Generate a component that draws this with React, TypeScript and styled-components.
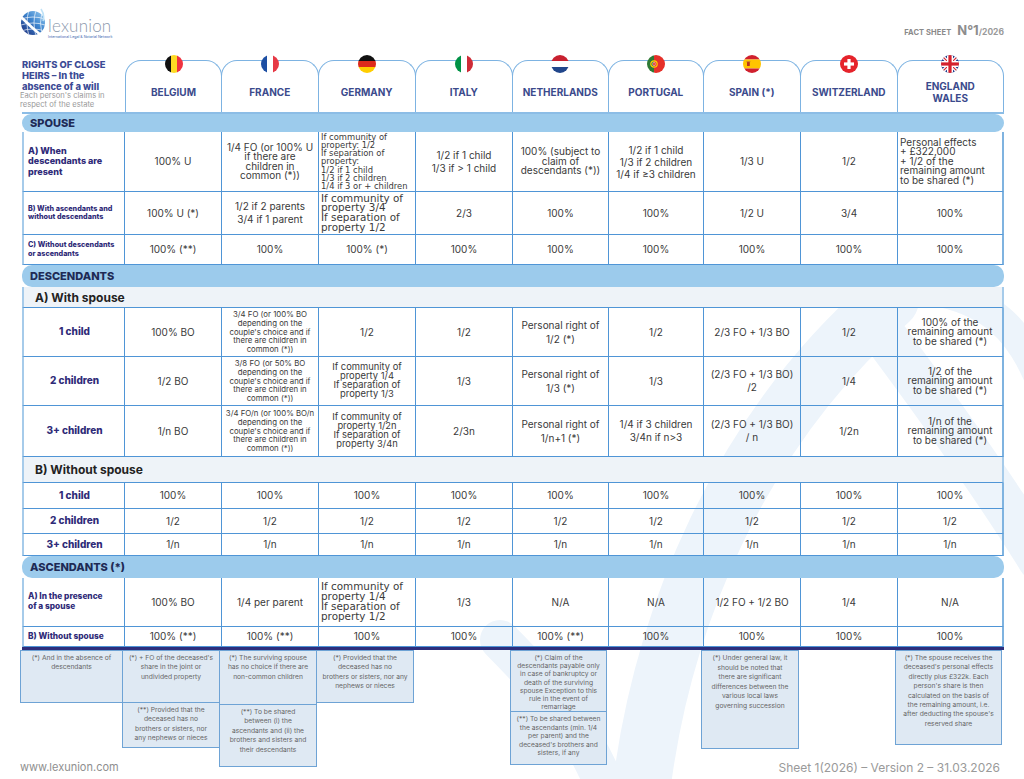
import React from 'react';
import styled, { createGlobalStyle } from 'styled-components';

const COLS = '103px 97px 97px 97px 97px 96px 95px 97px 97px 106px';
const LINE = '#4f95d6';
const EDGE = '#a6cbea';

const GlobalStyle = createGlobalStyle`
    html, body {
        margin: 0;
        padding: 0;
        background: #fff;
    }
    body {
        font-family: Inter, "Noto Sans", sans-serif;
        color: #3a3a3a;
    }
`;

const Page = styled.div`
    position: relative;
    width: 1024px;
    height: 779px;
    overflow: hidden;
    background: #fff;
    display: flex;
    flex-direction: column;
`;

const Watermark = styled.svg`
    position: absolute;
    inset: 0;
    z-index: 0;
    pointer-events: none;
`;

const Content = styled.div`
    position: relative;
    z-index: 1;
    display: flex;
    flex-direction: column;
    height: 100%;
`;

const TopBar = styled.div`
    height: 52px;
    display: flex;
    justify-content: space-between;
    align-items: flex-start;
    padding: 7px 20px 0 19px;
    box-sizing: border-box;
`;

const Logo = styled.div`
    display: flex;
    align-items: flex-start;
    gap: 3px;
`;

const LogoText = styled.div`
    display: flex;
    flex-direction: column;
    padding-top: 11px;
`;

const LogoName = styled.span`
    font-family: Lato, "Noto Sans", sans-serif;
    font-weight: 300;
    font-size: 17px;
    line-height: 16px;
    color: #8c99ad;
    letter-spacing: 0.2px;
`;

const LogoTag = styled.span`
    font-size: 3.6px;
    line-height: 5px;
    margin-top: 1px;
    color: #3a66b0;
    white-space: nowrap;
`;

const FactSheet = styled.div`
    margin-top: 15px;
    display: flex;
    align-items: baseline;
    gap: 6px;
    color: #8a8a8a;
    font-weight: 700;
`;

const FactLabel = styled.span`
    font-size: 7.5px;
    letter-spacing: 0.1px;
`;

const FactNum = styled.span`
    font-size: 13px;
    color: #8d8d8d;

    small {
        font-size: 8.5px;
        color: #9a9a9a;
    }
`;

const Sheet = styled.div`
    margin-left: 22px;
    width: 982px;
    display: flex;
    flex-direction: column;
`;

const HeaderRow = styled.div`
    display: grid;
    grid-template-columns: ${COLS};
    height: 60px;
`;

const TitleCell = styled.div`
    padding-top: 8px;
    display: flex;
    flex-direction: column;
`;

const Title = styled.span`
    font-size: 9.4px;
    line-height: 10.8px;
    font-weight: 800;
    color: #3c4b95;
`;

const TitleSub = styled.span`
    font-size: 7.6px;
    line-height: 8.4px;
    color: #9a9a9a;
    margin-left: -2px;
`;

const Tab = styled.div`
    position: relative;
    margin-top: 8px;
    border: 1.5px solid #7db3e2;
    border-bottom: none;
    border-radius: 16px 16px 0 0;
    display: flex;
    align-items: center;
    justify-content: center;
    text-align: center;
    padding-top: 10px;
    font-size: 10px;
    line-height: 12px;
    font-weight: 700;
    color: #3b4a8c;
    white-space: pre-line;

    & + & {
        margin-left: -1.5px;
    }
`;

const FlagWrap = styled.div`
    position: absolute;
    top: -6px;
    left: 50%;
    transform: translateX(-50%);
    width: 18px;
    height: 18px;
`;

const TopRule = styled.div`
    height: 2px;
    background: #8cbde6;
`;

const SectionBar = styled.div<{ $h: number }>`
    height: ${(p) => p.$h}px;
    background: #9ccbec;
    border-radius: 10px;
    display: flex;
    align-items: center;
    padding-left: 8px;
    font-size: 11px;
    font-weight: 800;
    color: #1e2a55;
    box-sizing: border-box;
`;

const SubHeader = styled.div<{ $h: number }>`
    height: ${(p) => p.$h}px;
    background: #eef3f8;
    border-left: 2px solid ${EDGE};
    border-right: 2px solid ${EDGE};
    border-bottom: 1px solid ${LINE};
    display: flex;
    align-items: center;
    padding-left: 11px;
    font-size: 12px;
    font-weight: 700;
    color: #222;
    box-sizing: border-box;
`;

const Row = styled.div<{ $h: number }>`
    display: grid;
    grid-template-columns: ${COLS};
    height: ${(p) => p.$h}px;
`;

const LabelCell = styled.div<{ $center: boolean; $size: number }>`
    border-left: 2px solid ${EDGE};
    border-right: 1px solid ${LINE};
    border-bottom: 1px solid ${LINE};
    display: flex;
    align-items: center;
    justify-content: ${(p) => (p.$center ? 'center' : 'flex-start')};
    text-align: ${(p) => (p.$center ? 'center' : 'left')};
    padding: 0 3px 0 4px;
    font-size: ${(p) => p.$size}px;
    line-height: 1.18;
    font-weight: 800;
    color: #2f2b78;
    white-space: pre-line;
    box-sizing: border-box;
`;

const Cell = styled.div<{ $s: number; $lh: number; $left: boolean; $dv: boolean }>`
    border-right: 1px solid ${LINE};
    border-bottom: 1px solid ${LINE};
    display: flex;
    align-items: center;
    justify-content: ${(p) => (p.$left ? 'flex-start' : 'center')};
    text-align: ${(p) => (p.$left ? 'left' : 'center')};
    padding: 0 2px;
    font-family: ${(p) => (p.$dv ? '"DejaVu Sans", Verdana, sans-serif' : 'Inter, "Noto Sans", sans-serif')};
    font-size: ${(p) => p.$s}px;
    line-height: ${(p) => p.$lh};
    color: #3a3a3a;
    white-space: pre-line;
    box-sizing: border-box;
    overflow: visible;

    &:last-child {
        border-right: 2px solid #7fb3e0;
    }

    strong {
        font-weight: 500;
    }
`;

const NavyRule = styled.div`
    height: 3px;
    background: #2d2e7c;
`;

const NotesGrid = styled.div`
    display: grid;
    grid-template-columns: ${COLS};
    height: 106px;
    margin-left: -2px;
`;

const NoteCol = styled.div`
    display: flex;
    flex-direction: column;

    & + & {
        margin-left: -1px;
    }
`;

const NoteBox = styled.div<{ $h: number; $lh: number }>`
    height: ${(p) => p.$h}px;
    border: 1px solid #6ea3d5;
    background: #dfe9f3;
    box-sizing: border-box;
    padding: 3px 1px 0;
    font-size: 6.7px;
    line-height: ${(p) => p.$lh}px;
    color: #666;
    text-align: center;
    white-space: pre-line;
    flex-shrink: 0;

    & + & {
        margin-top: -1px;
    }
`;

const Footer = styled.div`
    height: 22px;
    display: flex;
    justify-content: space-between;
    align-items: center;
    padding: 0 24px 0 20px;
    color: #8f8f8f;
`;

const FooterLeft = styled.span`
    font-size: 11px;
`;

const FooterRight = styled.span`
    font-size: 12px;
    color: #9a9a9a;
`;

type Spec =
    | string
    | { t: string; head?: string; s?: number; lh?: number; left?: boolean; dv?: boolean };

interface RowData {
    label: string;
    center?: boolean;
    ls: number;
    h: number;
    cells: Spec[];
}

const Flag = ({ id, children }: { id: string; children: React.ReactNode }) => (
    <FlagWrap>
        <svg viewBox="0 0 18 18" width="18" height="18">
            <defs>
                <clipPath id={id}>
                    <circle cx="9" cy="9" r="9" />
                </clipPath>
            </defs>
            <g clipPath={`url(#${id})`}>{children}</g>
        </svg>
    </FlagWrap>
);

const flags: Record<string, React.ReactNode> = {
    be: (
        <>
            <rect x="0" y="0" width="6" height="18" fill="#111" />
            <rect x="6" y="0" width="6" height="18" fill="#fdda24" />
            <rect x="12" y="0" width="6" height="18" fill="#ef3340" />
        </>
    ),
    fr: (
        <>
            <rect x="0" y="0" width="6" height="18" fill="#1d4fa3" />
            <rect x="6" y="0" width="6" height="18" fill="#fff" />
            <rect x="12" y="0" width="6" height="18" fill="#e63946" />
        </>
    ),
    de: (
        <>
            <rect x="0" y="0" width="18" height="6" fill="#111" />
            <rect x="0" y="6" width="18" height="6" fill="#dd2a1b" />
            <rect x="0" y="12" width="18" height="6" fill="#ffce00" />
        </>
    ),
    it: (
        <>
            <rect x="0" y="0" width="6" height="18" fill="#009246" />
            <rect x="6" y="0" width="6" height="18" fill="#fff" />
            <rect x="12" y="0" width="6" height="18" fill="#ce2b37" />
        </>
    ),
    nl: (
        <>
            <rect x="0" y="0" width="18" height="6" fill="#c8202f" />
            <rect x="0" y="6" width="18" height="6" fill="#fff" />
            <rect x="0" y="12" width="18" height="6" fill="#21468b" />
        </>
    ),
    pt: (
        <>
            <rect x="0" y="0" width="7" height="18" fill="#2e7a35" />
            <rect x="7" y="0" width="11" height="18" fill="#e5302a" />
            <circle cx="7" cy="9" r="3.2" fill="none" stroke="#ffd400" strokeWidth="1.2" />
            <rect x="5.8" y="7.4" width="2.4" height="3.2" rx="0.6" fill="#e5302a" stroke="#fff" strokeWidth="0.5" />
        </>
    ),
    es: (
        <>
            <rect x="0" y="0" width="18" height="4.5" fill="#d0202e" />
            <rect x="0" y="4.5" width="18" height="9" fill="#ffc400" />
            <rect x="0" y="13.5" width="18" height="4.5" fill="#d0202e" />
            <rect x="4" y="6.8" width="2.8" height="4.2" rx="0.6" fill="#b8331e" />
            <rect x="3.4" y="6.2" width="4" height="0.9" fill="#c8862a" />
        </>
    ),
    ch: (
        <>
            <rect x="0" y="0" width="18" height="18" fill="#e5232b" />
            <rect x="7.4" y="4" width="3.2" height="10" fill="#fff" />
            <rect x="4" y="7.4" width="10" height="3.2" fill="#fff" />
        </>
    ),
    uk: (
        <>
            <rect x="0" y="0" width="18" height="18" fill="#1f3a8a" />
            <path d="M0 0 L18 18 M18 0 L0 18" stroke="#fff" strokeWidth="3.6" />
            <path d="M0 0 L18 18 M18 0 L0 18" stroke="#d4202c" strokeWidth="1.1" />
            <rect x="6" y="0" width="6" height="18" fill="#fff" />
            <rect x="0" y="6" width="18" height="6" fill="#fff" />
            <rect x="7.4" y="0" width="3.2" height="18" fill="#d4202c" />
            <rect x="0" y="7.4" width="18" height="3.2" fill="#d4202c" />
        </>
    ),
};

const countries = [
    { id: 'be', name: 'BELGIUM' },
    { id: 'fr', name: 'FRANCE' },
    { id: 'de', name: 'GERMANY' },
    { id: 'it', name: 'ITALY' },
    { id: 'nl', name: 'NETHERLANDS' },
    { id: 'pt', name: 'PORTUGAL' },
    { id: 'es', name: 'SPAIN (*)' },
    { id: 'ch', name: 'SWITZERLAND' },
    { id: 'uk', name: 'ENGLAND\nWALES' },
];

const spouseRows: RowData[] = [
    {
        label: 'A) When\ndescendants are\npresent',
        ls: 9,
        h: 60,
        cells: [
            '100% U',
            { t: '1/4 FO (or 100% U\nif there are\nchildren in\ncommon (*))', lh: 0.95 },
            {
                head: 'If community of\nproperty: 1/2\nIf separation of\nproperty:\n',
                t: '1/2 if 1 child\n1/3 if 2 children\n1/4 if 3 or + children',
                s: 8.4,
                lh: 0.98,
                left: true,
                dv: true,
            },
            '1/2 if 1 child\n1/3 if > 1 child',
            { t: '100% (subject to\nclaim of\ndescendants (*))', lh: 0.95 },
            { t: '1/2 if 1 child\n1/3 if 2 children\n1/4 if ≥3 children', lh: 1.2 },
            '1/3 U',
            '1/2',
            {
                t: 'Personal effects\n+ £322,000\n+ 1/2 of the\nremaining amount\nto be shared (*)',
                lh: 0.95,
                left: true,
            },
        ],
    },
    {
        label: 'B) With ascendants and\nwithout descendants',
        ls: 7.2,
        h: 43,
        cells: [
            '100% U (*)',
            '1/2 if 2 parents\n3/4 if 1 parent',
            { t: 'If community of\nproperty 3/4\nIf separation of\nproperty 1/2', s: 10.4, lh: 0.93, left: true, dv: true },
            '2/3',
            '100%',
            '100%',
            '1/2 U',
            '3/4',
            '100%',
        ],
    },
    {
        label: 'C) Without descendants\nor ascendants',
        ls: 7.2,
        h: 30,
        cells: ['100% (**)', '100%', '100% (*)', '100%', '100%', '100%', '100%', '100%', '100%'],
    },
];

const frSmall = (first: string): Spec => ({
    t: `${first}\ndepending on the\ncouple's choice and if\nthere are children in\ncommon (*))`,
    s: 7.8,
    lh: 1.12,
});

const deSmall = (a: string, b: string): Spec => ({
    t: `If community of\nproperty ${a}\nIf separation of\nproperty ${b}`,
    s: 9.4,
    lh: 0.95,
});

const remaining = (first: string): Spec => ({
    t: `${first}\nremaining amount\nto be shared (*)`,
    lh: 0.92,
});

const withSpouseRows: RowData[] = [
    {
        label: '1 child',
        center: true,
        ls: 10,
        h: 49,
        cells: [
            '100% BO',
            frSmall('3/4 FO (or 100% BO'),
            '1/2',
            '1/2',
            { t: 'Personal right of\n1/2 (*)', lh: 1.45 },
            '1/2',
            '2/3 FO + 1/3 BO',
            '1/2',
            remaining('100% of the'),
        ],
    },
    {
        label: '2 children',
        center: true,
        ls: 10,
        h: 49,
        cells: [
            '1/2 BO',
            frSmall('3/8 FO (or 50% BO'),
            deSmall('1/4', '1/3'),
            '1/3',
            { t: 'Personal right of\n1/3 (*)', lh: 1.45 },
            '1/3',
            '(2/3 FO + 1/3 BO)\n/2',
            '1/4',
            remaining('1/2 of the'),
        ],
    },
    {
        label: '3+ children',
        center: true,
        ls: 10,
        h: 51,
        cells: [
            '1/n BO',
            frSmall('3/4 FO/n (or 100% BO/n'),
            deSmall('1/2n', '3/4n'),
            '2/3n',
            { t: 'Personal right of\n1/n+1 (*)', lh: 1.45 },
            '1/4 if 3 children\n3/4n if n>3',
            '(2/3 FO + 1/3 BO)\n/ n',
            '1/2n',
            remaining('1/n of the'),
        ],
    },
];

const all = (v: string) => Array.from({ length: 9 }, () => v);

const withoutSpouseRows: RowData[] = [
    { label: '1 child', center: true, ls: 10, h: 26, cells: all('100%') },
    { label: '2 children', center: true, ls: 10, h: 25, cells: all('1/2') },
    { label: '3+ children', center: true, ls: 10, h: 22, cells: all('1/n') },
];

const ascendantRows: RowData[] = [
    {
        label: 'A) In the presence\nof a spouse',
        ls: 8.3,
        h: 49,
        cells: [
            '100% BO',
            '1/4 per parent',
            { t: 'If community of\nproperty 1/4\nIf separation of\nproperty 1/2', s: 10.4, lh: 0.95, left: true, dv: true },
            '1/3',
            'N/A',
            'N/A',
            '1/2 FO + 1/2 BO',
            '1/4',
            'N/A',
        ],
    },
    {
        label: 'B) Without spouse',
        ls: 8.3,
        h: 20,
        cells: ['100% (**)', '100% (**)', '100%', '100%', '100% (**)', '100%', '100%', '100%', '100%'],
    },
];

const notes: { h: number; lh?: number; t: string }[][] = [
    [{ h: 53, t: '(*) And in the absence of\ndescendants' }],
    [
        { h: 53, t: "(*) + FO of the deceased's\nshare in the joint or\nundivided property" },
        { h: 46, t: '(**) Provided that the\ndeceased has no\nbrothers or sisters, nor\nany nephews or nieces' },
    ],
    [
        { h: 55, t: '(*) The surviving spouse\nhas no choice if there are\nnon-common children' },
        { h: 63, t: '(**) To be shared\nbetween (i) the\nascendants and (ii) the\nbrothers and sisters and\ntheir descendants' },
    ],
    [{ h: 53, t: '(*) Provided that the\ndeceased has no\nbrothers or sisters, nor any\nnephews or nieces' }],
    [],
    [
        {
            h: 62,
            lh: 8.2,
            t: '(*) Claim of the\ndescendants payable only\nin case of bankruptcy or\ndeath of the surviving\nspouse Exception to this\nrule in the event of\nremarriage',
        },
        {
            h: 54,
            lh: 8.6,
            t: "(**) To be shared between\nthe ascendants (min. 1/4\nper parent) and the\ndeceased's brothers and\nsisters, if any",
        },
    ],
    [],
    [
        {
            h: 99,
            lh: 9.6,
            t: '(*) Under general law, it\nshould be noted that\nthere are significant\ndifferences between the\nvarious local laws\ngoverning succession',
        },
    ],
    [],
    [
        {
            h: 95,
            lh: 9.4,
            t: "(*) The spouse receives the\ndeceased's personal effects\ndirectly plus £322k. Each\nperson's share is then\ncalculated on the basis of\nthe remaining amount, i.e.\nafter deducting the spouse's\nreserved share",
        },
    ],
];

const DataCell = ({ spec }: { spec: Spec }) => {
    const c = typeof spec === 'string' ? { t: spec } : spec;
    return (
        <Cell $s={c.s ?? 10} $lh={c.lh ?? 1.28} $left={!!c.left} $dv={!!c.dv}>
            <span>
                {c.head && <strong>{c.head}</strong>}
                {c.t}
            </span>
        </Cell>
    );
};

const TableRows = ({ rows }: { rows: RowData[] }) => (
    <>
        {rows.map((r, i) => (
            <Row key={i} $h={r.h}>
                <LabelCell $center={!!r.center} $size={r.ls}>
                    {r.label}
                </LabelCell>
                {r.cells.map((c, j) => (
                    <DataCell key={j} spec={c} />
                ))}
            </Row>
        ))}
    </>
);

const Globe = () => (
    <svg width="26" height="34" viewBox="0 0 26 34">
        <defs>
            <linearGradient id="globeGrad" x1="1" y1="0" x2="0" y2="1">
                <stop offset="0" stopColor="#9fd0f2" />
                <stop offset="0.45" stopColor="#3f86cf" />
                <stop offset="1" stopColor="#1b2a78" />
            </linearGradient>
            <clipPath id="globeClip">
                <circle cx="14" cy="16" r="12" />
            </clipPath>
        </defs>
        <circle cx="14" cy="16" r="12" fill="url(#globeGrad)" />
        <g clipPath="url(#globeClip)" stroke="#fff" strokeWidth="0.8" fill="none" opacity="0.85">
            <path d="M2 12 Q14 8 26 12" />
            <path d="M2 18 Q14 14 26 18" />
            <path d="M2 24 Q14 20 26 24" />
            <path d="M10 3 Q6 16 10 29" />
            <path d="M17 3 Q13 16 17 29" />
            <path d="M23 4 Q20 16 23 28" />
        </g>
        <path d="M2 10 Q12 20 24 30" stroke="#fff" strokeWidth="2.6" fill="none" />
        <path d="M22 2 Q26 8 24 14" stroke="#bfe2f7" strokeWidth="1.6" fill="none" />
    </svg>
);

function App() {
    return (
        <Page>
            <GlobalStyle />
            <Watermark width="1024" height="779" viewBox="0 0 1024 779">
                <g fill="none" stroke="#edf4fb" strokeLinecap="round">
                    <path d="M640 800 C660 620 740 430 890 300" strokeWidth="58" />
                    <path d="M880 330 C940 410 990 480 1040 560" strokeWidth="44" />
                    <path d="M930 290 C990 300 1020 330 1040 380" strokeWidth="30" />
                    <path d="M500 640 C550 690 590 740 610 800" strokeWidth="40" />
                </g>
            </Watermark>
            <Content>
                <TopBar>
                    <Logo>
                        <Globe />
                        <LogoText>
                            <LogoName>lexunion</LogoName>
                            <LogoTag>International Legal &amp; Notarial Network</LogoTag>
                        </LogoText>
                    </Logo>
                    <FactSheet>
                        <FactLabel>FACT SHEET</FactLabel>
                        <FactNum>
                            N°1<small>/2026</small>
                        </FactNum>
                    </FactSheet>
                </TopBar>

                <Sheet>
                    <HeaderRow>
                        <TitleCell>
                            <Title>
                                RIGHTS OF CLOSE
                                <br />
                                HEIRS – In the
                                <br />
                                absence of a will
                            </Title>
                            <TitleSub>
                                Each person's claims in
                                <br />
                                respect of the estate
                            </TitleSub>
                        </TitleCell>
                        {countries.map((c) => (
                            <Tab key={c.id}>
                                <Flag id={`flag-${c.id}`}>{flags[c.id]}</Flag>
                                {c.name}
                            </Tab>
                        ))}
                    </HeaderRow>
                    <TopRule />

                    <SectionBar $h={18}>SPOUSE</SectionBar>
                    <TableRows rows={spouseRows} />

                    <SectionBar $h={22}>DESCENDANTS</SectionBar>
                    <SubHeader $h={21}>A) With spouse</SubHeader>
                    <TableRows rows={withSpouseRows} />
                    <SubHeader $h={26}>B) Without spouse</SubHeader>
                    <TableRows rows={withoutSpouseRows} />

                    <SectionBar $h={22}>ASCENDANTS (*)</SectionBar>
                    <TableRows rows={ascendantRows} />

                    <NavyRule />

                    <NotesGrid>
                        {notes.map((col, i) => (
                            <NoteCol key={i}>
                                {col.map((n, j) => (
                                    <NoteBox key={j} $h={n.h} $lh={n.lh ?? 9.4}>
                                        {n.t}
                                    </NoteBox>
                                ))}
                            </NoteCol>
                        ))}
                    </NotesGrid>
                </Sheet>

                <Footer>
                    <FooterLeft>www.lexunion.com</FooterLeft>
                    <FooterRight>Sheet 1(2026) – Version 2 – 31.03.2026</FooterRight>
                </Footer>
            </Content>
        </Page>
    );
}

export default App;
